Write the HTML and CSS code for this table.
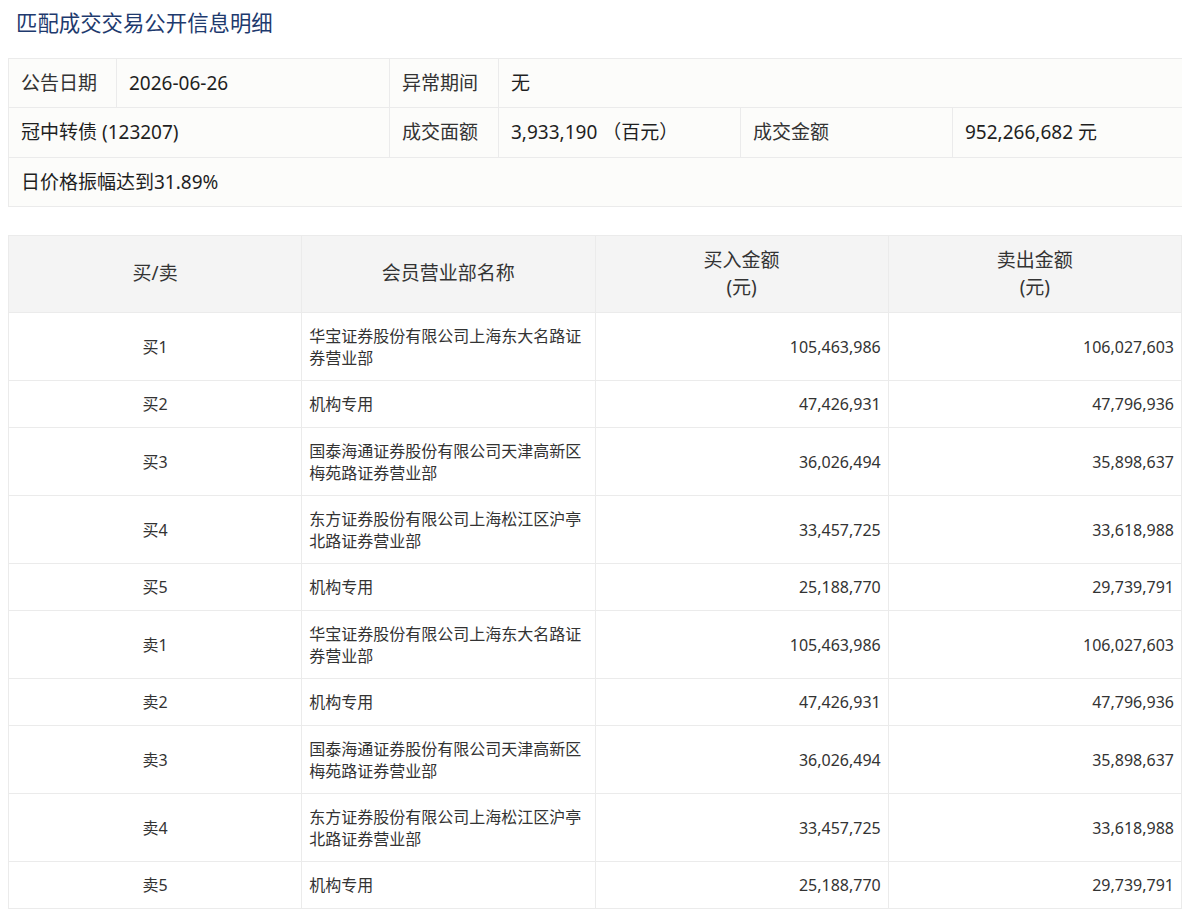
FILE: index.html
```html
<!DOCTYPE html>
<html lang="zh-CN">
<head>
<meta charset="utf-8">
<title>匹配成交交易公开信息明细</title>
<link rel="stylesheet" href="styles.css">
</head>
<body>
<h1 class="title">匹配成交交易公开信息明细</h1>
<table class="info">
  <colgroup>
    <col class="c1"><col class="c2"><col class="c3"><col class="c4"><col class="c5"><col class="c6">
  </colgroup>
  <tr>
    <td class="label">公告日期</td>
    <td class="val">2026-06-26</td>
    <td class="label">异常期间</td>
    <td class="val" colspan="3">无</td>
  </tr>
  <tr>
    <td class="val" colspan="2">冠中转债 (123207)</td>
    <td class="label">成交面额</td>
    <td class="val">3,933,190 （百元）</td>
    <td class="label">成交金额</td>
    <td class="val">952,266,682 元</td>
  </tr>
  <tr>
    <td class="val" colspan="6">日价格振幅达到31.89%</td>
  </tr>
</table>

<table class="detail">
  <thead>
    <tr>
      <th>买/卖</th>
      <th>会员营业部名称</th>
      <th>买入金额<br>(元)</th>
      <th>卖出金额<br>(元)</th>
    </tr>
  </thead>
  <tbody>
    <tr><td class="side">买1</td><td class="name">华宝证券股份有限公司上海东大名路证券营业部</td><td class="num">105,463,986</td><td class="num">106,027,603</td></tr>
    <tr><td class="side">买2</td><td class="name">机构专用</td><td class="num">47,426,931</td><td class="num">47,796,936</td></tr>
    <tr><td class="side">买3</td><td class="name">国泰海通证券股份有限公司天津高新区梅苑路证券营业部</td><td class="num">36,026,494</td><td class="num">35,898,637</td></tr>
    <tr><td class="side">买4</td><td class="name">东方证券股份有限公司上海松江区沪亭北路证券营业部</td><td class="num">33,457,725</td><td class="num">33,618,988</td></tr>
    <tr><td class="side">买5</td><td class="name">机构专用</td><td class="num">25,188,770</td><td class="num">29,739,791</td></tr>
    <tr><td class="side">卖1</td><td class="name">华宝证券股份有限公司上海东大名路证券营业部</td><td class="num">105,463,986</td><td class="num">106,027,603</td></tr>
    <tr><td class="side">卖2</td><td class="name">机构专用</td><td class="num">47,426,931</td><td class="num">47,796,936</td></tr>
    <tr><td class="side">卖3</td><td class="name">国泰海通证券股份有限公司天津高新区梅苑路证券营业部</td><td class="num">36,026,494</td><td class="num">35,898,637</td></tr>
    <tr><td class="side">卖4</td><td class="name">东方证券股份有限公司上海松江区沪亭北路证券营业部</td><td class="num">33,457,725</td><td class="num">33,618,988</td></tr>
    <tr><td class="side">卖5</td><td class="name">机构专用</td><td class="num">25,188,770</td><td class="num">29,739,791</td></tr>
  </tbody>
</table>
</body>
</html>
```
FILE: styles.css
```css
body {
  margin: 8px;
  background: #ffffff;
  font-family: "Noto Sans", "Noto Sans CJK SC", sans-serif;
  color: #333333;
}

.title {
  margin: 0 0 20px 0;
  padding-left: 8px;
  font-size: 21.4px;
  line-height: 30px;
  font-weight: normal;
  color: #1e3a6e;
}

table {
  border-collapse: collapse;
  width: 1174px;
  table-layout: fixed;
}

.info {
  background: #fcfcfa;
  border: 1px solid #ebebeb;
  font-size: 19px;
}

.info td {
  border: 1px solid #ebebeb;
  padding: 11px 12px;
  line-height: 26.3px;
  white-space: nowrap;
}

.info .c1 { width: 108px; }
.info .c2 { width: 273px; }
.info .c3 { width: 109px; }
.info .c4 { width: 242px; }
.info .c5 { width: 212px; }
.info .c6 { width: 230px; }

.info .label { color: #333333; }
.info .val { color: #1f1f1f; }

.detail {
  margin-top: 28px;
  border: 1px solid #ebebeb;
}

.detail th {
  background: #f4f4f4;
  border: 1px solid #ebebeb;
  font-weight: normal;
  font-size: 19px;
  line-height: 27px;
  padding: 11px 7px;
  color: #333333;
  text-align: center;
}

.detail td {
  border: 1px solid #ebebeb;
  font-size: 16px;
  line-height: 22px;
  padding: 12px 7px 11.4px;
  color: #333333;
  background: #ffffff;
}

.detail .side { text-align: center; }
.detail .name { text-align: left; }
.detail .num { text-align: right; }
```
